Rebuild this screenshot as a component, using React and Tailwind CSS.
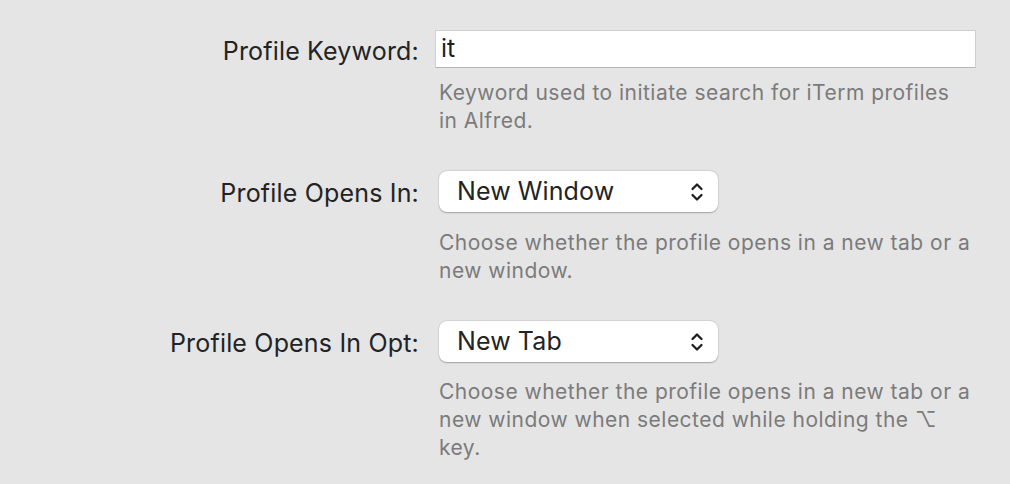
import React from 'react';

const font = { fontFamily: 'Inter, "Liberation Sans", "DejaVu Sans", sans-serif' };

function Chevrons() {
  return (
    <svg width="14" height="22" viewBox="0 0 14 22" fill="none" stroke="#1f1f1f" strokeWidth="2.3" strokeLinecap="round" strokeLinejoin="round">
      <path d="M2.5 8 L7 3.5 L11.5 8" />
      <path d="M2.5 14 L7 18.5 L11.5 14" />
    </svg>
  );
}

function Popup({ value }) {
  return (
    <div className="ml-[4px] w-[279px] h-[41px] bg-white rounded-[8px] shadow-[0_0.5px_1.5px_rgba(0,0,0,0.28),0_0_0_0.5px_rgba(0,0,0,0.06)] flex items-center justify-between pl-[18px] pr-[14px]">
      <span className="text-[25px] text-[#232323] tracking-[0.1px]">{value}</span>
      <Chevrons />
    </div>
  );
}

function Desc({ children, className = '' }) {
  return (
    <p className={`ml-[4px] w-[534px] text-[21px] leading-[28px] text-[#7b7b7b] tracking-[0.48px] ${className}`}>{children}</p>
  );
}

function Row({ label, children, labelTop }) {
  return (
    <div className="grid grid-cols-[419px_541px] gap-x-[16px]">
      <div className={`text-right text-[25px] text-[#232323] tracking-[0.18px] ${labelTop}`}>{label}</div>
      <div>{children}</div>
    </div>
  );
}

export default function App() {
  return (
    <div className="w-[1010px] h-[484px] bg-[#e5e5e5] overflow-hidden pt-[30px]" style={font}>
      <Row label="Profile Keyword:" labelTop="pt-[3px]">
        <div className="h-[38px] bg-white border border-[#cfcfcf] border-b-[#b5b5b5] flex items-center pl-[5px]">
          <span className="text-[25px] text-[#1f1f1f]">it</span>
        </div>
        <Desc className="mt-[11px]">Keyword used to initiate search for iTerm profiles in Alfred.</Desc>
      </Row>

      <div className="mt-[36px]">
        <Row label="Profile Opens In:" labelTop="pt-[4px]">
          <Popup value="New Window" />
          <Desc className="mt-[17px]">Choose whether the profile opens in a new tab or a new window.</Desc>
        </Row>
      </div>

      <div className="mt-[36px]">
        <Row label="Profile Opens In Opt:" labelTop="pt-[4px]">
          <Popup value="New Tab" />
          <Desc className="mt-[16px]">Choose whether the profile opens in a new tab or a new window when selected while holding the ⌥ key.</Desc>
        </Row>
      </div>
    </div>
  );
}
